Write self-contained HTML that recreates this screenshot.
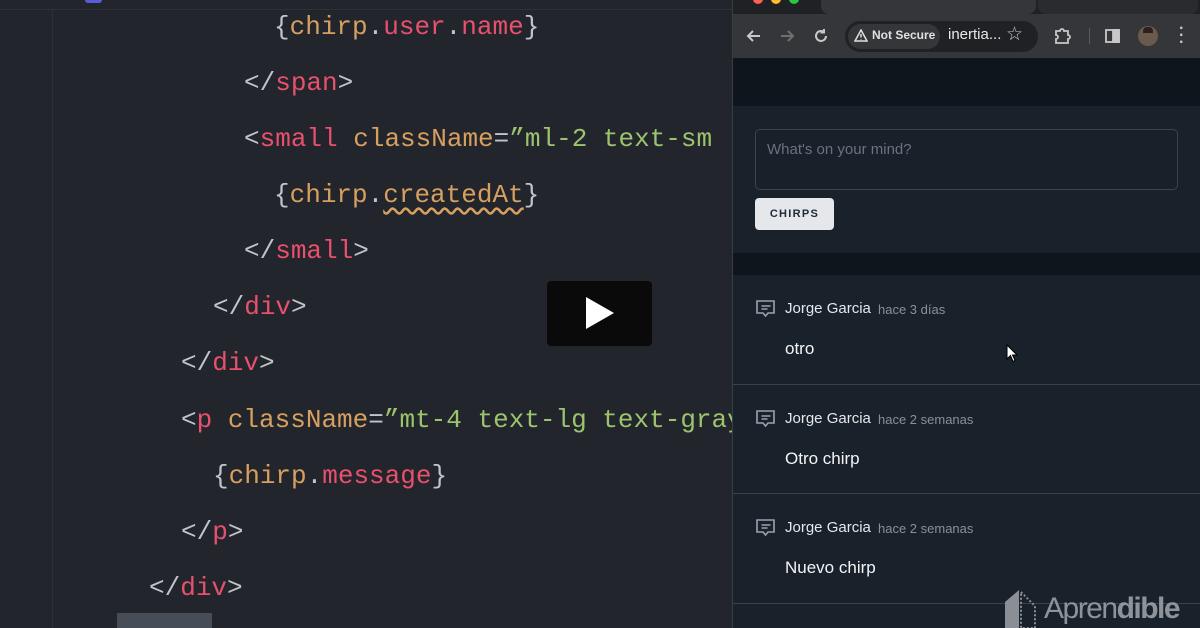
<!DOCTYPE html>
<html><head><meta charset="utf-8">
<style>
*{margin:0;padding:0;box-sizing:border-box}
body{width:1200px;height:628px;overflow:hidden;background:#22252b;position:relative;font-family:"Liberation Sans",sans-serif}
.code{position:absolute;left:0;top:0;width:732px;height:628px;background:#22252b;overflow:hidden}
.ln{position:absolute;font-family:"Liberation Mono",monospace;font-size:26px;line-height:32px;white-space:pre;color:#abb2bf}
.t{color:#e8506e}.a{color:#d7a060}.s{color:#9cc46e}.p{color:#c0c4cc}
.gutter{position:absolute;left:52px;top:10px;width:1px;height:618px;background:#2c3038}
.topline{position:absolute;left:0;top:9px;width:732px;height:1px;background:#2d3139}
.browser{position:absolute;left:732px;top:0;width:468px;height:628px;background:#0e151d;border-left:1px solid #3a3d42}
.tabbar{position:absolute;left:0;top:0;width:468px;height:14px;background:#202124}
.toolbar{position:absolute;left:0;top:14px;width:468px;height:44px;background:#35363a}
.ic{position:absolute;color:#c8c8c8;font-size:18px}
.card{position:absolute;left:0;width:468px;background:#19212a}
.uname{position:absolute;font-size:15px;color:#e5e7eb}
.time{position:absolute;font-size:13px;color:#8a9099}
.msg{position:absolute;font-size:17px;color:#f3f4f6}
</style></head><body>
<div class="code">
<div class="topline"></div>
<div class="gutter"></div>
<div style="position:absolute;left:85px;top:0;width:17px;height:3px;background:#5b5bd6;border-radius:0 0 3px 3px"></div>
<div class="ln" style="left:274px;top:11px"><span class="p">{</span><span class="a">chirp</span><span class="p">.</span><span class="t">user</span><span class="p">.</span><span class="t">name</span><span class="p">}</span></div>
<div class="ln" style="left:244px;top:67px"><span class="p">&lt;/</span><span class="t">span</span><span class="p">&gt;</span></div>
<div class="ln" style="left:244px;top:123px"><span class="p">&lt;</span><span class="t">small</span> <span class="a">className</span><span class="p">=</span><span class="s">”ml-2 text-sm</span></div>
<div class="ln" style="left:274px;top:179px"><span class="p">{</span><span class="a">chirp</span><span class="p">.</span><span class="a" style="text-decoration:underline wavy #d7a060;text-underline-offset:5px">createdAt</span><span class="p">}</span></div>
<div class="ln" style="left:244px;top:235px"><span class="p">&lt;/</span><span class="t">small</span><span class="p">&gt;</span></div>
<div class="ln" style="left:213px;top:291px"><span class="p">&lt;/</span><span class="t">div</span><span class="p">&gt;</span></div>
<div class="ln" style="left:181px;top:347px"><span class="p">&lt;/</span><span class="t">div</span><span class="p">&gt;</span></div>
<div class="ln" style="left:181px;top:404px"><span class="p">&lt;</span><span class="t">p</span> <span class="a">className</span><span class="p">=</span><span class="s">”mt-4 text-lg text-gray</span></div>
<div class="ln" style="left:213px;top:460px"><span class="p">{</span><span class="a">chirp</span><span class="p">.</span><span class="t">message</span><span class="p">}</span></div>
<div class="ln" style="left:181px;top:516px"><span class="p">&lt;/</span><span class="t">p</span><span class="p">&gt;</span></div>
<div class="ln" style="left:149px;top:572px"><span class="p">&lt;/</span><span class="t">div</span><span class="p">&gt;</span></div>
<div style="position:absolute;left:117px;top:613px;width:95px;height:15px;background:#474d56"></div>
<div style="position:absolute;left:547px;top:281px;width:105px;height:65px;background:#0a0a0b;border-radius:4px"></div>
<svg style="position:absolute;left:586px;top:297px" width="30" height="33"><polygon points="0,0 28,16 0,32" fill="#fff"/></svg>
</div>
<div class="browser">
<div class="tabbar">
<div style="position:absolute;left:20px;top:-6px;width:10px;height:10px;border-radius:50%;background:#ff5f57"></div>
<div style="position:absolute;left:38px;top:-6px;width:10px;height:10px;border-radius:50%;background:#febc2e"></div>
<div style="position:absolute;left:56px;top:-6px;width:10px;height:10px;border-radius:50%;background:#28c840"></div>
<div style="position:absolute;left:88px;top:0;width:215px;height:14px;background:#35363a;border-radius:0 0 8px 8px"></div>
<div style="position:absolute;left:305px;top:0;width:160px;height:14px;background:#2a2b2e;border-radius:0 0 8px 8px"></div>
</div>
<div class="toolbar">
<svg style="position:absolute;left:13px;top:14px" width="16" height="16" fill="none" stroke="#c8c8c8" stroke-width="2"><path d="M14 8H2M7 3L2 8l5 5"/></svg>
<svg style="position:absolute;left:46px;top:14px" width="16" height="16" fill="none" stroke="#707070" stroke-width="2"><path d="M2 8h12M9 3l5 5-5 5"/></svg>
<svg style="position:absolute;left:80px;top:14px" width="16" height="16" fill="none" stroke="#c8c8c8" stroke-width="2"><path d="M13 8a5 5 0 1 1-2-4M11 1v3.5h-3.5"/></svg>
<div style="position:absolute;left:112px;top:7px;width:193px;height:31px;background:#202124;border-radius:16px"></div>
<div style="position:absolute;left:115px;top:10px;width:92px;height:25px;background:#35363a;border-radius:13px"></div>
<svg style="position:absolute;left:121px;top:15px" width="14" height="13" fill="none" stroke="#e0e0e0" stroke-width="1.5"><path d="M7 1L13 12H1Z M7 5v3.5 M7 10v.5"/></svg>
<div style="position:absolute;left:139px;top:14px;font-size:12px;font-weight:bold;color:#e0e0e0">Not Secure</div>
<div style="position:absolute;left:215px;top:12px;font-size:15px;color:#e8e8e8">inertia...</div>
<div class="ic" style="left:273px;top:9px;font-size:19px">☆</div>
<svg style="position:absolute;left:321px;top:12px" width="18" height="20" fill="none" stroke="#c8c8c8" stroke-width="1.8"><path d="M2 5h4a2 2 0 0 1 4 0h4v4a2 2 0 0 1 0 4v4H2v-4a2 2 0 0 0 0-4Z"/></svg>
<div style="position:absolute;left:356px;top:14px;width:1px;height:16px;background:#5a5a5a"></div>
<svg style="position:absolute;left:372px;top:14px" width="16" height="16" fill="none" stroke="#c8c8c8" stroke-width="1.8"><rect x="1" y="2" width="13" height="12"/><rect x="8" y="2" width="6" height="12" fill="#c8c8c8"/></svg>
<div style="position:absolute;left:405px;top:12px;width:20px;height:20px;border-radius:50%;background:#6a5a4e"></div>
<div style="position:absolute;left:410px;top:13px;width:10px;height:6px;background:#2a2020;border-radius:4px 4px 0 0"></div>
<div style="position:absolute;left:446px;top:11px;color:#c8c8c8;font-size:16px;line-height:7px;font-weight:bold">·<br>·<br>·</div>
</div>
<div class="card" style="top:106px;height:147px">
<div style="position:absolute;left:22px;top:23px;width:423px;height:61px;border:1px solid #3b434d;border-radius:5px;background:#18202a"></div>
<div style="position:absolute;left:34px;top:35px;font-size:15px;color:#6b7280">What's on your mind?</div>
<div style="position:absolute;left:22px;top:92px;width:79px;height:32px;background:#e5e7eb;border-radius:4px;font-size:11px;font-weight:bold;letter-spacing:1.3px;color:#1f2937;text-align:center;line-height:32px">CHIRPS</div>
</div>
<div class="card" style="top:275px;height:353px"></div>
<div style="position:absolute;left:0;top:384px;width:468px;height:1px;background:#3a414a"></div>
<div style="position:absolute;left:0;top:493px;width:468px;height:1px;background:#3a414a"></div>
<div style="position:absolute;left:0;top:603px;width:468px;height:1px;background:#3a414a"></div>
<div id="items"></div>
<svg style="position:absolute;left:273px;top:344px" width="14" height="20"><path d="M1 1v14l3.5-3.5 2.5 6 2-1-2.5-5.5H11Z" fill="#fff" stroke="#000" stroke-width="1"/></svg>
<svg style="position:absolute;left:272px;top:590px" width="32" height="38"><path d="M0 12L14 0v38H0Z" fill="#8a8f96"/><path d="M16 2L30 16v22H16Z" fill="none" stroke="#8a8f96" stroke-width="2" stroke-dasharray="2 2"/></svg>
<div style="position:absolute;left:311px;top:592px;font-size:30px;color:#9aa0a6;letter-spacing:-1.5px;font-weight:300;opacity:.9">Apren<span style="font-weight:600">dible</span></div>
</div>
<script>
var d=[[309,"hace 3 días","otro"],[419,"hace 2 semanas","Otro chirp"],[528,"hace 2 semanas","Nuevo chirp"]];
var h="";
d.forEach(function(r){var y=r[0];
h+='<svg style="position:absolute;left:22px;top:'+(y-10)+'px" width="22" height="22" fill="none" stroke="#9ca3af" stroke-width="1.6"><path d="M2 2h17v12h-6l-2.5 3-2.5-3H2Z M6.5 7h9 M6.5 10h6"/></svg>';
h+='<div class="uname" style="left:52px;top:'+(y-9)+'px">Jorge Garcia</div>';
h+='<div class="time" style="left:145px;top:'+(y-7)+'px">'+r[1]+'</div>';
h+='<div class="msg" style="left:52px;top:'+(y+30)+'px">'+r[2]+'</div>';});
document.getElementById("items").innerHTML=h;
</script>
</body></html>
